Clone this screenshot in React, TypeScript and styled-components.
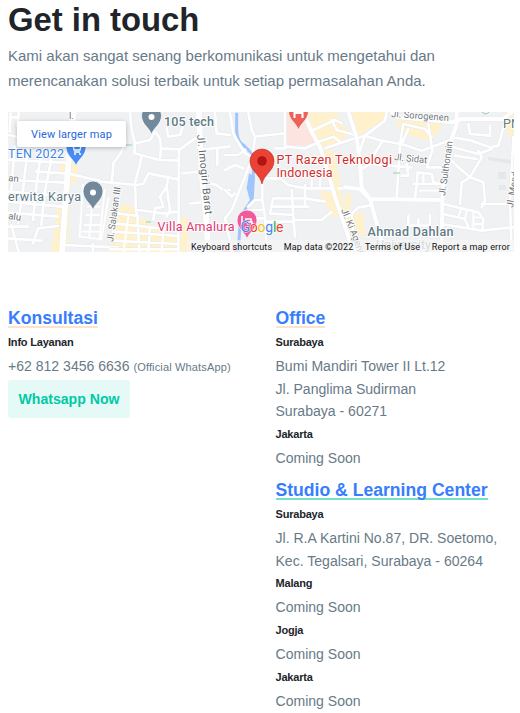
import React from "react";
import styled, { createGlobalStyle } from "styled-components";

const GlobalStyle = createGlobalStyle`
  * { box-sizing: border-box; }
  body {
    margin: 0;
    background: #fff;
    font-family: "Liberation Sans", Arial, sans-serif;
    color: #687a88;
  }
`;

const Page = styled.main`
  width: 520px;
  height: 713px;
  overflow: hidden;
  padding: 0 6px 0 8px;
`;

const Title = styled.h1`
  margin: 0;
  height: 43px;
  font-size: 32.8px;
  line-height: 39px;
  font-weight: 700;
  color: #212529;
  white-space: nowrap;
`;

const Intro = styled.p`
  margin: 0 0 18px;
  height: 51px;
  font-size: 15px;
  line-height: 25.2px;
  white-space: nowrap;
`;

const MapFrame = styled.section`
  position: relative;
  width: 506px;
  height: 140px;
  overflow: hidden;
  font-family: Roboto, sans-serif;

  & > svg { display: block; }
`;

const LargerMap = styled.a`
  position: absolute;
  left: 9px;
  top: 9px;
  width: 109px;
  height: 26px;
  border-radius: 2px;
  background: #fff;
  box-shadow: 0 1px 4px rgba(0, 0, 0, 0.25);
  color: #2a66e0;
  font-size: 11px;
  letter-spacing: 0.12px;
  line-height: 27px;
  text-align: center;
`;

const MapFooter = styled.div`
  position: absolute;
  right: 0;
  bottom: 0;
  height: 12px;
  display: flex;
  gap: 11.5px;
  padding: 0 4px;
  background: rgba(245, 245, 245, 0.72);
  color: #111;
  font-size: 9px;
  letter-spacing: 0.17px;
  line-height: 14px;
  white-space: nowrap;
`;

const Columns = styled.div`
  display: grid;
  grid-template-columns: 267.5px 1fr;
  padding-top: 56px;
`;

const Heading = styled.h2<{ $line: string; $gap?: number }>`
  width: max-content;
  height: 20px;
  margin: ${(p) => p.$gap ?? 0}px 0 3px;
  border-bottom: 2px solid ${(p) => p.$line};
  font-size: 17.6px;
  line-height: 20px;
  font-weight: 700;
  color: #377dff;
  white-space: nowrap;
`;

const Label = styled.h3`
  margin: 0;
  height: 23.4px;
  font-size: 11px;
  letter-spacing: -0.2px;
  line-height: 23.4px;
  font-weight: 700;
  color: #212529;
`;

const Text = styled.p`
  margin: 0;
  padding-top: 0.6px;
  font-size: 14.05px;
  line-height: 22.7px;
  white-space: nowrap;

  small {
    font-size: 11px;
    letter-spacing: 0.15px;
  }
`;

const Button = styled.a`
  display: flex;
  align-items: center;
  justify-content: center;
  width: 122px;
  height: 38px;
  margin-top: 1.3px;
  border-radius: 3px;
  background: #e5f9f6;
  color: #00c9a7;
  font-size: 14.1px;
  font-weight: 700;
`;

const Pin = ({ x, y, color, children }: { x: number; y: number; color: string; children?: React.ReactNode }) => (
  <g transform={`translate(${x} ${y})`}>
    <path d="M0 0C-2-7-10-10-10-19A10 10 0 0 1 10-19C10-10 2-7 0 0Z" fill={color} stroke="#fff" strokeWidth=".7" />
    {children ?? <circle cy="-17.500" r="3" fill="#fff" />}
  </g>
);

interface Tile {
  x: number;
  y: number;
  commercial: string;
  lanes: string;
  roads: string;
  avenues: string;
}

// Street geometry is split into districts, each drawn at three units per pixel.
const tiles: Tile[] = [
  {
    x: 8,
    y: 110,
    commercial: "M195 110H212L208 215 188 220 180 405 168 405ZM146 290H168L158 426H130ZM160 145H175L172 185H155Z",
    lanes: "M225 225L215 380 280 388 302 262M240 290H275M235 315H274M230 345H275M224 365H274M290 240L275 385M252 290L244 380",
    roads: "M178 190L330 225M0 75L25 80M60 110L45 240 30 340M100 120L85 230 75 330M135 120L110 250 100 345M0 245L155 258M0 275L160 290M0 308L150 320M0 350H60M75 400L90 355 150 348M10 345L32 426M0 385L100 392M8 10L5 65M28 50L32 10M0 150L170 158M85 185L178 190M5 22H32M0 210L170 218M165 405L330 412M255 402V426M20 110L10 240",
    avenues: "M197 8L190 60 182 150 172 280 162 426",
  },
  {
    x: 100,
    y: 110,
    commercial: "M55 295L75 280 100 292 108 320 150 332 150 345 240 390V426H30L40 330ZM243 320H262L268 426H240Z",
    lanes: "M245 190L300 185M85 320L70 426M190 355L185 426",
    roads: "M78 95L62 130 40 160 38 190 35 215M90 8L95 60 105 100 103 130 178 150 235 152M125 140L118 170 105 220 108 300 112 320 118 426M0 215L110 225 130 222 145 190 235 208M105 100L150 90 165 65 180 85 183 115 240 118 285 85 297 85M183 115L180 145M200 55L205 80 240 75 255 30M237 118L235 426M205 200L200 230 180 260 190 290 165 295 160 330M200 230L210 300 200 320M115 300L190 310 235 305M50 310L115 318M45 340L150 352 235 360M40 365L235 378M35 392L235 402M30 418H235M150 350L145 426M345 8L350 70 390 75M310 118L390 110M352 115V165M310 215L350 225 370 240 390 240M270 280L300 278",
    avenues: "M297 8L300 100 308 220 318 320 325 426",
  },
  {
    x: 225,
    y: 110,
    commercial: "M240 8H335L352 45 375 65 345 100 300 115 275 95ZM293 122H325L342 200 355 290 390 330V426H380L340 300 310 200ZM283 240L325 250 340 320H320Z",
    lanes: "M235 205L240 190 285 195V235M260 190V235",
    roads: "M15 8L25 70 35 90 60 130 78 140M0 135L40 135 60 120M70 8L80 60 90 80 85 125M90 80L130 75 180 70M180 8V115H150M180 110L240 115 275 100M75 160L60 200 20 300 0 325M0 240L20 260 30 250M0 180L30 165 55 175M112 220V270L120 320 125 426M112 205H165L190 225 240 235H320M70 290L90 270H112M70 300H115M65 325H118M145 265H240L300 275M140 290H250M145 265L135 310 205 315M200 240L205 320 210 380M240 225V290M120 335H205M205 330H290L320 305M265 60L330 30 350 40M280 95L325 80 345 95M300 115L390 85M320 30L335 60 390 75M340 235H390M0 325L15 390 20 426",
    avenues: "M235 8L262 70 285 110 310 190 330 260 350 320 385 426",
  },
  {
    x: 345,
    y: 104,
    commercial: "M20 24H130L110 55 60 80 45 100 30 60ZM155 42L290 55 285 80 250 110 165 85ZM0 265L20 275 15 320H0ZM15 330L55 325 60 400 25 385ZM480 24H505V110L485 80Z",
    lanes: "M350 310L340 340M365 320L360 345M385 340H410M385 360H410M385 325V370M235 210V240M225 260H285",
    roads: "M45 100L60 95 120 50 125 24M60 95L110 110 165 120 175 60M60 95L45 140M110 115L70 180M175 60L240 75 260 100M190 75L170 120 230 140 310 110M165 125L155 280M185 180L190 215H170M50 195L75 180 200 190M250 60L262 140 245 190H310M215 240L218 205 260 210 265 235 285 240M205 240H290M215 240L210 280M335 60L325 100 380 110 435 130 460 125 470 90 480 45M370 60L375 90 435 95V65M325 130L400 150 440 135M330 155L395 165M400 140L410 160 375 220 340 190 320 170M375 220L350 235 345 300M375 220L415 235 420 290 410 310M295 300L400 325 415 345 412 375M295 330L360 345 370 370M290 360L410 380 505 370M410 300H505M190 360V335M220 360V345M185 365H255V335M20 330L40 310 75 305M0 340L20 330 30 444M505 100L495 300 500 440",
    avenues: "M10 24L35 100 45 180 50 250 75 285 90 340 120 444M0 250L45 255 75 285 292 288M290 444L292 290 295 240 310 130 335 60V24M140 24L160 40 320 55 350 45H475L500 24",
  },
];

function MapArt() {
  return (
    <svg width="506" height="140" viewBox="8 112 506 140" fill="none">
      <path fill="#f0f1f3" d="M8 112H514V252H8Z" />
      <path fill="#e5e7e9" d="M488 157L512 160V164L488 160ZM498 172H506V179H498ZM499 185H506V190H499Z" />
      {tiles.map((t) => (
        <path key={t.x} d={t.commercial} fill="#fff1cc" transform={`translate(${t.x} ${t.y}) scale(.33333)`} />
      ))}
      <g transform="translate(225 110) scale(.33333)">
        <path d="M185 8H240L275 95 265 108 185 105Z" fill="#fce4e1" />
        <path d="M-10 404H40V426H-10Z" fill="#f4bccd" />
        <path d="M35 8V60Q36 95 55 105L85 135V200L75 225 80 270 60 300 45 340 40 426" stroke="#9fc5ff" strokeWidth="9" />
        <path d="M72 190L90 200 86 270 76 275 65 235Z" fill="#9fc5ff" />
      </g>
      {tiles.map((t) => (
        <g key={t.x} transform={`translate(${t.x} ${t.y}) scale(.33333)`} strokeLinejoin="round" strokeLinecap="round">
          <path d={t.roads} stroke="#e3e6e9" strokeWidth="10.500" />
          <path d={t.avenues} stroke="#e3e6e9" strokeWidth={t.x < 200 ? 20 : 14} />
          <path d={t.lanes} stroke="#fff" strokeWidth="5.500" />
          <path d={t.roads} stroke="#fff" strokeWidth="8" />
          <path d={t.avenues} stroke="#fff" strokeWidth={t.x < 200 ? 18 : 12} />
        </g>
      ))}
      <path d="M126 145H132M146 222H151M393 173H400M482 112Q486 116 489 112" stroke="#91d5a5" />

      <Pin x={76} y={166} color="#4a8cf5">
        <path d="M-5-22H-3L-2-16H4L5-20H-2M-2-14H4" stroke="#fff" strokeWidth="1.3" />
        <circle cx="-1" cy="-12" r="1" fill="#fff" /><circle cx="4" cy="-12" r="1" fill="#fff" />
      </Pin>
      <Pin x={93} y={210} color="#71899a" />
      <Pin x={151.5} y={134.5} color="#71899a" />
      <Pin x={298.5} y={130} color="#ec6258"><path d="M-4-23V-12M4-23V-12M-4-17H4" stroke="#fff" strokeWidth="2" /></Pin>
      <Pin x={247} y={239} color="#ef5b9c"><path d="M-5-23V-14M-5-17H5V-14M-2-20H4V-17" stroke="#fff" strokeWidth="1.6" /></Pin>
      <path d="M262 184C260 174 250 171 250 161A12 12 0 0 1 274 161C274 171 264 174 262 184Z" fill="#ea4335" stroke="#c5221f" strokeWidth=".6" />
      <circle cx="262" cy="161" r="4.8" fill="#b31412" />

      <g fontFamily="Roboto, sans-serif" stroke="#fff" strokeWidth="1.800" strokeLinejoin="round" paintOrder="stroke">
        <g fontSize="12.500" fill="#607985">
          <text x="8" y="157.500" textLength="56" fill="#4384e8">TEN 2022</text>
          <text x="8" y="201" textLength="73">erwita Karya</text>
          <text x="164" y="125.500" textLength="50" fontWeight="500">105 tech</text>
          <text x="503" y="127.500">PN</text>
          <text x="367.500" y="236" textLength="86" fontWeight="500">Ahmad Dahlan</text>
          <text x="376" y="249" textLength="55" opacity=".8">University</text>
        </g>
        <g fontSize="12.500" fill="#cf2d2d">
          <text x="276.500" y="164" textLength="115.500">PT Razen Teknologi</text>
          <text x="276.500" y="177" textLength="56">Indonesia</text>
          <text x="157.500" y="231" textLength="77" fill="#e13670">Villa Amalura</text>
        </g>
        <g fontSize="9.500" fill="#70757a">
          <text transform="translate(8 181) rotate(5)">an</text>
          <text transform="translate(8 219) rotate(8)">alu</text>
          <text transform="translate(69 119)">l.</text>
          <text transform="translate(113 242) rotate(-82)" textLength="55">Jl. Salakan III</text>
          <text transform="translate(197 135) rotate(84)" textLength="80" fontSize="10.500" fill="#62686d">Jl. Imogiri Barat</text>
          <text transform="translate(391 117) rotate(4)" textLength="58">Jl. Sorogenen</text>
          <text transform="translate(394 160) rotate(6)" textLength="33">Jl. Sidat</text>
          <text transform="translate(445 196) rotate(-82)" textLength="55">Jl. Sulthonain</text>
          <text transform="translate(341 210) rotate(68)">Jl. Ki Ageng</text>
          <text transform="translate(513 208) rotate(-81)">Jl. Mendung</text>
        </g>
        <text x="240.500" y="231.500" textLength="43" fontSize="14" strokeWidth="1">
          <tspan fill="#4285f4">G</tspan><tspan fill="#ea4335">o</tspan><tspan fill="#fbbc04">o</tspan><tspan fill="#4285f4">g</tspan><tspan fill="#34a853">l</tspan><tspan fill="#ea4335">e</tspan>
        </text>
      </g>
    </svg>
  );
}

export default function App() {
  return (
    <>
      <GlobalStyle />
      <Page>
        <Title>Get in touch</Title>
        <Intro>
          Kami akan sangat senang berkomunikasi untuk mengetahui dan<br />
          merencanakan solusi terbaik untuk setiap permasalahan Anda.
        </Intro>
        <MapFrame>
          <MapArt />
          <LargerMap>View larger map</LargerMap>
          <MapFooter>
            <span>Keyboard shortcuts</span><span>Map data ©2022</span><span>Terms of Use</span><span>Report a map error</span>
          </MapFooter>
        </MapFrame>
        <Columns>
          <section>
            <Heading $line="#fbe3cc">Konsultasi</Heading>
            <Label>Info Layanan</Label>
            <Text>+62 812 3456 6636 <small>(Official WhatsApp)</small></Text>
            <Button>Whatsapp Now</Button>
          </section>
          <section>
            <Heading $line="#fbe3cc">Office</Heading>
            <Label>Surabaya</Label>
            <Text>Bumi Mandiri Tower II Lt.12<br />Jl. Panglima Sudirman<br />Surabaya - 60271</Text>
            <Label>Jakarta</Label>
            <Text>Coming Soon</Text>
            <Heading $line="#77dfcd" $gap={10.2}>Studio &amp; Learning Center</Heading>
            <Label>Surabaya</Label>
            <Text>Jl. R.A Kartini No.87, DR. Soetomo,<br />Kec. Tegalsari, Surabaya - 60264</Text>
            <Label>Malang</Label>
            <Text>Coming Soon</Text>
            <Label>Jogja</Label>
            <Text>Coming Soon</Text>
            <Label>Jakarta</Label>
            <Text>Coming Soon</Text>
          </section>
        </Columns>
      </Page>
    </>
  );
}
